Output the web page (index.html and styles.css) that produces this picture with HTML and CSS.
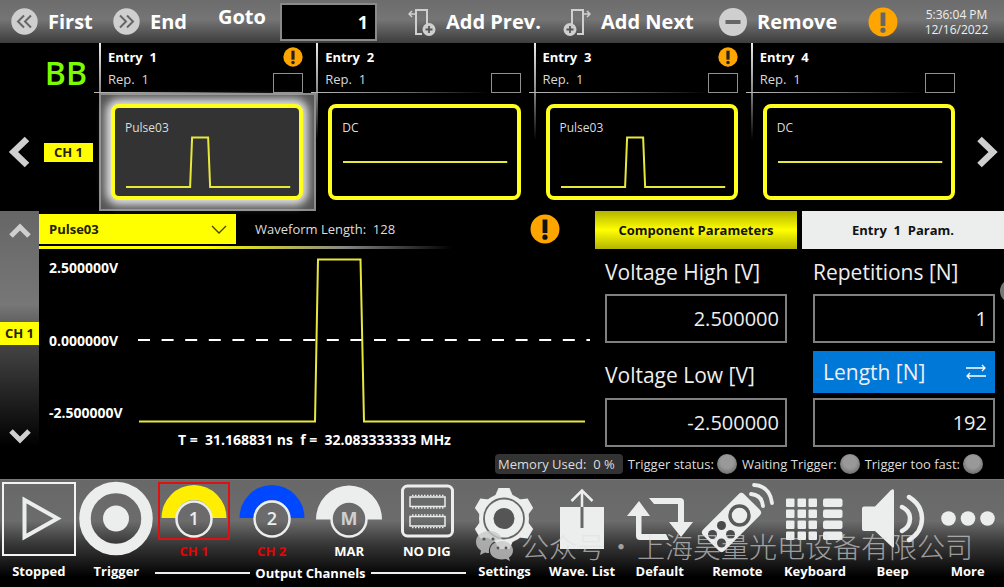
FILE: index.html
```html
<!DOCTYPE html>
<html lang="en">
  <head>
    <meta charset="UTF-8" />
    <meta name="viewport" content="width=device-width, initial-scale=1.0" />
    <title>Sequence Editor</title>
    <link rel="stylesheet" href="styles.css" />
  </head>
  <body>
    <!-- shared symbols -->
    <svg class="defs" width="0" height="0" aria-hidden="true">
      <symbol id="warn" viewBox="0 0 30 30">
        <circle cx="15" cy="15" r="14.5" fill="#ffa500" />
        <path d="M12.6 5.5h4.8v13.5h-4.8z" fill="currentColor" />
        <circle cx="15" cy="23.2" r="2.6" fill="currentColor" />
      </symbol>
      <symbol id="pulse" viewBox="0 0 184 88" preserveAspectRatio="none">
        <path d="M11 79H75L77 29.5H93L95 79H175" fill="none" stroke="#e8e83c" stroke-width="2" />
      </symbol>
      <symbol id="dc" viewBox="0 0 184 88" preserveAspectRatio="none">
        <path d="M11 54H175" fill="none" stroke="#e8e83c" stroke-width="2" />
      </symbol>
    </svg>

    <header class="topbar">
      <button class="tool">
        <svg width="27" height="27" viewBox="0 0 27 27">
          <circle cx="13.5" cy="13.5" r="13.2" fill="#cfcfcf" />
          <path d="M13 7.5L7 13.5L13 19.5M20 7.5L14 13.5L20 19.5" fill="none" stroke="#666" stroke-width="2" />
        </svg>
        First
      </button>
      <button class="tool">
        <svg width="27" height="27" viewBox="0 0 27 27">
          <circle cx="13.5" cy="13.5" r="13.2" fill="#cfcfcf" />
          <path d="M7 7.5L13 13.5L7 19.5M14 7.5L20 13.5L14 19.5" fill="none" stroke="#666" stroke-width="2" />
        </svg>
        End
      </button>
      <label class="goto-label" for="goto">Goto</label>
      <input class="goto-input" id="goto" type="text" value="1" />
      <button class="tool">
        <svg width="28" height="28" viewBox="0 0 28 28">
          <path d="M8 9V2H19V16M8 9V26H14" fill="none" stroke="#cfcfcf" stroke-width="2" />
          <path d="M7 6H1M4 3L1 6L4 9" fill="none" stroke="#cfcfcf" stroke-width="1.5" />
          <circle cx="21" cy="21.5" r="6.5" fill="#cfcfcf" />
          <path d="M21 18v7M17.5 21.5h7" stroke="#555" stroke-width="1.8" />
        </svg>
        Add Prev.
      </button>
      <button class="tool">
        <svg width="28" height="28" viewBox="0 0 28 28">
          <path d="M20 9V2H9V16M20 9V26H14" fill="none" stroke="#cfcfcf" stroke-width="2" />
          <path d="M21 6H27M24 3L27 6L24 9" fill="none" stroke="#cfcfcf" stroke-width="1.5" />
          <circle cx="7" cy="21.5" r="6.5" fill="#cfcfcf" />
          <path d="M7 18v7M3.5 21.5h7" stroke="#555" stroke-width="1.8" />
        </svg>
        Add Next
      </button>
      <button class="tool">
        <svg width="28" height="28" viewBox="0 0 28 28">
          <circle cx="14" cy="14" r="14" fill="#cfcfcf" />
          <path d="M6.5 14h15" stroke="#666" stroke-width="4" />
        </svg>
        Remove
      </button>
      <button class="tool warn-top" aria-label="Warnings">
        <svg width="30" height="30"><use href="#warn" /></svg>
      </button>
      <div class="clock">
        <div>5:36:04 PM</div>
        <div>12/16/2022</div>
      </div>
    </header>

    <section class="sequence">
      <div class="seq-left">
        <div class="board">BB</div>
        <div class="seq-channel">
          <button class="arrow" aria-label="Previous entries">
            <svg width="22" height="32" viewBox="0 0 22 32">
              <path d="M19 3L5.5 16L19 29" fill="none" stroke="#cfcfcf" stroke-width="6.5" />
            </svg>
          </button>
          <span class="ch-tag">CH 1</span>
        </div>
      </div>

      <article class="entry selected">
        <div class="entry-head">
          <div>
            <h3>Entry  1</h3>
            <p>Rep.  1</p>
          </div>
          <div class="entry-flags">
            <svg width="20" height="20"><use href="#warn" /></svg>
            <input type="checkbox" aria-label="Mark entry 1" />
          </div>
        </div>
        <div class="entry-body">
          <button class="wave">
            <span>Pulse03</span>
            <svg><use href="#pulse" /></svg>
          </button>
        </div>
      </article>
      <article class="entry">
        <div class="entry-head">
          <div>
            <h3>Entry  2</h3>
            <p>Rep.  1</p>
          </div>
          <div class="entry-flags">
            <input type="checkbox" aria-label="Mark entry 2" />
          </div>
        </div>
        <div class="entry-body">
          <button class="wave">
            <span>DC</span>
            <svg><use href="#dc" /></svg>
          </button>
        </div>
      </article>
      <article class="entry">
        <div class="entry-head">
          <div>
            <h3>Entry  3</h3>
            <p>Rep.  1</p>
          </div>
          <div class="entry-flags">
            <svg width="20" height="20"><use href="#warn" /></svg>
            <input type="checkbox" aria-label="Mark entry 3" />
          </div>
        </div>
        <div class="entry-body">
          <button class="wave">
            <span>Pulse03</span>
            <svg><use href="#pulse" /></svg>
          </button>
        </div>
      </article>
      <article class="entry">
        <div class="entry-head">
          <div>
            <h3>Entry  4</h3>
            <p>Rep.  1</p>
          </div>
          <div class="entry-flags">
            <input type="checkbox" aria-label="Mark entry 4" />
          </div>
        </div>
        <div class="entry-body">
          <button class="wave">
            <span>DC</span>
            <svg><use href="#dc" /></svg>
          </button>
        </div>
      </article>

      <div class="seq-right">
        <button class="arrow" aria-label="Next entries">
          <svg width="22" height="32" viewBox="0 0 22 32">
            <path d="M3.5 3L17 16L3.5 29" fill="none" stroke="#cfcfcf" stroke-width="6.5" />
          </svg>
        </button>
      </div>
    </section>

    <main class="editor">
      <div class="strip">
        <button class="arrow" aria-label="Previous channel">
          <svg width="22" height="16" viewBox="0 0 22 16">
            <path d="M2 13L11 4L20 13" fill="none" stroke="#cfcfcf" stroke-width="5" />
          </svg>
        </button>
        <span class="ch-tag">CH 1</span>
        <button class="arrow" aria-label="Next channel">
          <svg width="22" height="16" viewBox="0 0 22 16">
            <path d="M2 3L11 12L20 3" fill="none" stroke="#cfcfcf" stroke-width="5" />
          </svg>
        </button>
      </div>

      <section class="waveform">
        <div class="wave-head">
          <div class="picker">
            <select aria-label="Waveform">
              <option>Pulse03</option>
              <option>DC</option>
            </select>
            <svg width="16" height="9" viewBox="0 0 16 9">
              <path d="M1 1L8 8L15 1" fill="none" stroke="#444400" stroke-width="1.3" />
            </svg>
          </div>
          <span class="wave-length">Waveform Length:  128</span>
          <svg width="30" height="30"><use href="#warn" /></svg>
        </div>
        <div class="plot">
          <div class="axis">
            <span>2.500000V</span>
            <span>0.000000V</span>
            <span>-2.500000V</span>
          </div>
          <svg viewBox="0 0 452 180" preserveAspectRatio="none">
            <path d="M0 91H452" stroke="#fff" stroke-width="2" stroke-dasharray="12 11.6" />
            <path d="M1 172.5H177L180 10.5H222.5L226 172.5H447" fill="none" stroke="#e8e83c" stroke-width="2" />
          </svg>
        </div>
        <p class="timing">T =  31.168831 ns  f =  32.083333333 MHz</p>
      </section>

      <section class="params">
        <div class="tabs">
          <button class="tab active">Component Parameters</button>
          <button class="tab">Entry  1  Param.</button>
        </div>
        <div class="fields">
          <div class="field">
            <label for="vhigh">Voltage High [V]</label>
            <input id="vhigh" type="text" value="2.500000" />
          </div>
          <div class="field">
            <label for="reps">Repetitions [N]</label>
            <input id="reps" type="text" value="1" />
          </div>
          <div class="field">
            <label for="vlow">Voltage Low [V]</label>
            <input id="vlow" type="text" value="-2.500000" />
          </div>
          <div class="field">
            <button class="unit">
              Length [N]
              <svg width="22" height="16" viewBox="0 0 22 16">
                <path d="M1 4H20M17 1L20 4L17 7M21 12H2M5 9L2 12L5 15" fill="none" stroke="#fff" stroke-width="1.3" />
              </svg>
            </button>
            <input id="length" type="text" value="192" aria-label="Length [N]" />
          </div>
        </div>
        <span class="handle"></span>
      </section>

      <div class="status">
        <span class="memory">Memory Used:  0 %</span>
        <span class="led">Trigger status:</span>
        <span class="led">Waiting Trigger:</span>
        <span class="led">Trigger too fast:</span>
      </div>
    </main>

    <footer class="bottombar">
      <button class="action">
        <svg width="74" height="76" viewBox="0 0 74 76">
          <rect x="1" y="2" width="72" height="72" fill="none" stroke="#f2f4f4" stroke-width="2" />
          <path d="M22.5 19V56L55.5 37.5Z" fill="none" stroke="#eceeee" stroke-width="4" />
        </svg>
        Stopped
      </button>
      <button class="action">
        <svg width="74" height="76" viewBox="0 0 74 76">
          <circle cx="37" cy="37.5" r="31" fill="none" stroke="#eceeee" stroke-width="11.5" />
          <circle cx="37" cy="37.5" r="13" fill="#eceeee" />
        </svg>
        Trigger
      </button>

      <div class="channels">
        <button class="channel off">
          <svg width="74" height="60" viewBox="0 0 74 60">
            <rect x="2" y="2" width="70" height="56" fill="none" stroke="#dd1111" stroke-width="2" />
            <path d="M4.5 37A32.5 33 0 0 1 69.5 37H55A18 18 0 0 0 19 37Z" fill="#ffee00" />
            <circle cx="37" cy="38" r="17.5" fill="none" stroke="#eceeee" stroke-width="2.5" />
            <text x="37" y="44" text-anchor="middle">1</text>
          </svg>
          CH 1
        </button>
        <button class="channel off">
          <svg width="74" height="60" viewBox="0 0 74 60">
            <path d="M4.5 37A32.5 33 0 0 1 69.5 37H55A18 18 0 0 0 19 37Z" fill="#0048ff" />
            <circle cx="37" cy="38" r="17.5" fill="none" stroke="#eceeee" stroke-width="2.5" />
            <text x="37" y="44" text-anchor="middle">2</text>
          </svg>
          CH 2
        </button>
        <button class="channel">
          <svg width="74" height="60" viewBox="0 0 74 60">
            <path d="M4 38.5A33 34 0 0 1 70 38.5H55A18 18 0 0 0 19 38.5Z" fill="#eceeee" />
            <circle cx="37" cy="38" r="17.5" fill="none" stroke="#eceeee" stroke-width="2.5" />
            <text class="marker" x="37" y="44" text-anchor="middle">M</text>
          </svg>
          MAR
        </button>
        <button class="channel">
          <svg width="74" height="60" viewBox="0 0 74 60">
            <g fill="none" stroke="#eceeee">
              <rect x="12.5" y="5" width="50" height="50" rx="5" stroke-width="3" />
              <path d="M20 16H55V25.5H20ZM20 35.5H55V45H20Z" stroke-width="1.5" />
              <path d="M22 14.5H54M22 27H54M22 34H54M22 46.5H54" stroke-width="1.5" stroke-dasharray="1.5 1.5" />
            </g>
          </svg>
          NO DIG
        </button>
        <div class="group-title">Output Channels</div>
      </div>

      <button class="action">
        <svg width="74" height="76" viewBox="0 0 74 76">
          <g fill="#eceeee">
            <circle cx="37" cy="37.5" r="25" />
            <path id="tooth" d="M28 15L31.5 7H42.5L46 15V20H28Z" />
            <use href="#tooth" transform="rotate(60 37 37.5)" />
            <use href="#tooth" transform="rotate(120 37 37.5)" />
            <use href="#tooth" transform="rotate(180 37 37.5)" />
            <use href="#tooth" transform="rotate(240 37 37.5)" />
            <use href="#tooth" transform="rotate(300 37 37.5)" />
          </g>
          <circle cx="37" cy="37.5" r="20" fill="none" stroke="#666" stroke-width="1.8" />
          <circle cx="37" cy="37.5" r="10.5" fill="#555" />
        </svg>
        Settings
      </button>
      <button class="action">
        <svg width="74" height="76" viewBox="0 0 74 76">
          <path d="M15 26H59V68H15Z" fill="#eceeee" />
          <path d="M37 9V26M26.5 20L37 9.5L47.5 20" fill="none" stroke="#eceeee" stroke-width="2.5" />
          <path d="M37 26V47" stroke="#666" stroke-width="3" />
        </svg>
        Wave. List
      </button>
      <button class="action">
        <svg width="74" height="76" viewBox="0 0 74 76">
          <path d="M26 17H57Q61 17 61 21V41H70L58 56L46 41H55V23H31Z" fill="#eceeee" />
          <path d="M46 59H17Q13 59 13 55V35H4L16 20L27 35H18.5V53H43Z" fill="#eceeee" />
        </svg>
        Default
      </button>
      <button class="action">
        <svg width="74" height="76" viewBox="0 0 74 76">
          <rect x="16.5" y="12.5" width="30" height="58" rx="4" fill="#eceeee" transform="rotate(45 31.5 41.5)" />
          <circle cx="39.5" cy="34.5" r="9.5" fill="none" stroke="#5a5a5a" stroke-width="3.5" />
          <g fill="#4a4a4a">
            <circle cx="21.5" cy="44.5" r="4.5" />
            <circle cx="12.5" cy="53.5" r="4.5" />
            <circle cx="30.5" cy="53.5" r="4.5" />
            <circle cx="21.5" cy="62" r="4.5" />
          </g>
          <path d="M51 13Q62 14 63 25M54 4Q70 5 72 22" fill="none" stroke="#eceeee" stroke-width="3.8" stroke-linecap="round" />
        </svg>
        Remote
      </button>
      <button class="action">
        <svg width="74" height="76" viewBox="0 0 74 76">
          <g fill="#eceeee">
            <g id="keys">
              <rect x="8" y="17.5" width="8.5" height="8.5" rx="1" />
              <rect x="19.5" y="17.5" width="8.5" height="8.5" rx="1" />
              <rect x="30.5" y="17.5" width="8.5" height="8.5" rx="1" />
              <rect x="45" y="17.5" width="19.5" height="8.5" rx="2" />
            </g>
            <use href="#keys" y="11" />
            <use href="#keys" y="22" />
            <use href="#keys" y="33" />
          </g>
        </svg>
        Keyboard
      </button>
      <button class="action">
        <svg width="74" height="76" viewBox="0 0 74 76">
          <path d="M8 25.5H19L35 9Q38 7 38 10V65Q38 68 35 65L19 50H8Q6 50 6 48V27.5Q6 25.5 8 25.5Z" fill="#eceeee" />
          <path d="M46 26Q54 30 54 37.5Q54 46 46 50M53 16Q66 24 66 37.5Q66 51 53 59" fill="none" stroke="#eceeee" stroke-width="4.5" stroke-linecap="round" />
        </svg>
        Beep
      </button>
      <button class="action">
        <svg width="74" height="76" viewBox="0 0 74 76">
          <g fill="#eceeee">
            <circle cx="17.5" cy="37.5" r="7.3" />
            <circle cx="37" cy="37.5" r="7.3" />
            <circle cx="56.5" cy="37.5" r="7.3" />
          </g>
        </svg>
        More
      </button>

      <div class="watermark">
        <svg width="40" height="32" viewBox="0 0 40 32">
          <path d="M14 1C6 1 1 6 1 12C1 16 3 18.5 6 20.5L5 25L10 22.5Q12 23 14 23C13 15 19 9.5 27 9.5C26 4 20 1 14 1Z" />
          <path d="M27 11C20 11 15 15 15 20.5C15 26 20 29.5 27 29.5L31 29L35 31L34 27.5C37 25.5 38 23 38 20.5C38 15 33 11 27 11Z" />
          <g fill="#555">
            <circle cx="9" cy="9" r="1.6" />
            <circle cx="18" cy="9" r="1.6" />
            <circle cx="23" cy="18" r="1.4" />
            <circle cx="31" cy="18" r="1.4" />
          </g>
        </svg>
        <span lang="zh">公众号</span>
        <span>·</span>
        <span lang="zh">上海昊量光电设备有限公司</span>
      </div>
    </footer>
  </body>
</html>
```

FILE: styles.css
```css
* {
  box-sizing: border-box;
}
body {
  margin: 0;
  min-height: 100vh;
  display: flex;
  flex-direction: column;
  background: #000;
  color: #fff;
  font-family: "Open Sans", "Noto Sans", sans-serif;
  font-size: 13px;
  overflow-x: hidden;
}
h3,
p {
  margin: 0;
  white-space: pre;
}
button,
input,
select {
  font: inherit;
  color: inherit;
  margin: 0;
  padding: 0;
  border: none;
  border-radius: 0;
  background: none;
}
button {
  cursor: pointer;
}
svg {
  display: block;
  flex-shrink: 0;
}
.defs {
  position: absolute;
}

/* top bar */
.topbar {
  display: grid;
  grid-template-columns: 102fr 105fr 62fr 128fr 155fr 156fr 149fr 41fr 95fr;
  align-items: center;
  height: 43px;
  padding-left: 11px;
  background: linear-gradient(#6c6c6c, #757575 45%, #3c3c3c);
}
.tool {
  display: flex;
  align-items: center;
  gap: 10px;
  font-size: 20px;
  font-weight: bold;
  line-height: 40px;
  white-space: nowrap;
}
.warn-top {
  color: #666;
}
.goto-label {
  align-self: start;
  font-size: 20px;
  font-weight: bold;
  line-height: 34px;
}
.goto-input {
  width: 97px;
  height: 38px;
  padding-right: 7px;
  border: 2px solid #8a8a8a;
  background: #000;
  font-size: 18px;
  font-weight: bold;
  text-align: right;
}
.clock {
  color: #eee;
  font-size: 12px;
  line-height: 15px;
  text-align: center;
}

/* entries */
.sequence {
  display: grid;
  grid-template-columns: 99px repeat(4, 1fr) 36px;
  height: 168px;
}
.seq-left {
  display: flex;
  flex-direction: column;
}
.board {
  height: 60px;
  padding-right: 12px;
  color: #7cfc00;
  font-size: 32px;
  font-weight: 600;
  line-height: 60px;
  text-align: right;
}
.seq-channel {
  display: flex;
  align-items: center;
  gap: 14px;
  height: 98px;
  padding-left: 8px;
}
.ch-tag {
  background: #ffff00;
  color: #222200;
  font-weight: bold;
  text-align: center;
}
.seq-channel .ch-tag {
  width: 49px;
  line-height: 19px;
}
.seq-right {
  display: flex;
  align-items: center;
  height: 98px;
  margin-top: 60px;
  padding-left: 8px;
}
.entry {
  display: flex;
  flex-direction: column;
  background: linear-gradient(#eee, #888 50%, transparent) left top / 2px 97px no-repeat;
}
.entry-head {
  display: flex;
  justify-content: space-between;
  height: 50px;
  margin-left: -5px;
  padding-left: 14px;
  padding-right: 13px;
  background: linear-gradient(90deg, #bbb, #777 40%, transparent 80%) left bottom / 100% 1px no-repeat;
}
.entry h3 {
  padding-top: 4px;
  font-size: 13px;
  line-height: 20px;
}
.entry p {
  color: #d8d8d8;
  line-height: 24px;
}
.entry-flags {
  display: flex;
  flex-direction: column;
  justify-content: flex-end;
  align-items: flex-end;
  gap: 6px;
  color: #222;
}
.entry-flags input {
  appearance: none;
  width: 30px;
  height: 20px;
  border: 1px solid #909090;
}
.entry-body {
  flex: 1;
  padding: 11px 13px 11px 12px;
}
.selected .entry-body {
  border: 2px solid #8c8c8c;
  padding: 9px 11px 9px 10px;
  background: #555;
}
.wave {
  position: relative;
  display: block;
  width: 100%;
  height: 96px;
  border: 4px solid #ffff1e;
  border-radius: 8px;
  background: #000;
  color: #ddd;
  text-align: left;
}
.selected .wave {
  background: #333;
  box-shadow: 0 0 9px 5px #e4e4e4;
}
.wave span {
  display: block;
  height: 100%;
  padding: 10px;
  font-size: 12px;
  line-height: 20px;
}
.wave svg {
  position: absolute;
  inset: 0;
  width: 100%;
  height: 100%;
}

/* waveform editor */
.editor {
  flex: 1;
  display: grid;
  grid-template-columns: 39px 551fr 414fr;
  grid-template-rows: 1fr 28px;
}
.strip {
  grid-row: 1 / 3;
  display: flex;
  flex-direction: column;
  align-items: center;
  justify-content: space-between;
  padding: 12px 0 35px;
  background: linear-gradient(#666, #777 35%, #444 50%, #000 88%);
}
.strip .ch-tag {
  width: 100%;
  line-height: 23px;
}
.waveform {
  display: flex;
  flex-direction: column;
}
.wave-head {
  display: flex;
  align-items: center;
  height: 38px;
  padding-right: 30px;
  padding-bottom: 2px;
  color: #111;
  background: linear-gradient(90deg, #ffff00 30%, #888 55%, transparent 75%) left bottom / 100% 3px no-repeat;
}
.picker {
  position: relative;
  width: 197px;
  height: 31px;
  border-bottom: 1px solid #000;
}
.picker select {
  appearance: none;
  width: 100%;
  height: 100%;
  padding-left: 10px;
  background: #ffff00;
  color: #222200;
  font-weight: bold;
}
.picker svg {
  position: absolute;
  right: 9px;
  top: 11px;
  pointer-events: none;
}
.wave-length {
  flex: 1;
  padding-left: 19px;
  color: #ddd;
  white-space: pre;
}
.plot {
  flex: 1;
  display: flex;
}
.axis {
  display: flex;
  flex-direction: column;
  justify-content: space-between;
  width: 99px;
  padding: 9px 0 6px 10px;
  font-size: 14px;
  font-weight: bold;
  line-height: 20px;
}
.plot svg {
  flex: 1;
  width: 0;
  height: 180px;
}
.timing {
  font-size: 14px;
  font-weight: bold;
  line-height: 22px;
  text-align: center;
}
.params {
  position: relative;
  padding-left: 5px;
}
.tabs {
  display: grid;
  grid-template-columns: 1fr 1fr;
  gap: 5px;
}
.tab {
  height: 38px;
  background: #eceeee;
  color: #111;
  font-size: 13px;
  font-weight: bold;
  white-space: pre;
}
.tab.active {
  background: linear-gradient(#b4b400, #ffff00 50%, #b4b400);
}
.fields {
  display: grid;
  grid-template-columns: 1fr 1fr;
  column-gap: 26px;
  row-gap: 8px;
  padding: 0 9px 0 10px;
}
.field label,
.unit {
  display: flex;
  align-items: center;
  width: 100%;
  height: 42px;
  color: #eee;
  font-size: 21px;
}
.field label {
  height: 45px;
}
.field:nth-child(3) label {
  height: 47px;
}
.unit {
  justify-content: space-between;
  padding: 0 8px 0 10px;
  background: #0078d7;
}
.field input {
  width: 100%;
  height: 49px;
  padding-right: 6px;
  border: 2px solid #808080;
  color: #eee;
  font-size: 20px;
  text-align: right;
}
.unit + input {
  margin-top: 5px;
}
.handle {
  position: absolute;
  right: -20px;
  top: 68px;
  width: 24px;
  height: 24px;
  border-radius: 50%;
  background: #777;
}
.status {
  grid-column: 2 / 4;
  display: flex;
  align-items: center;
  justify-content: flex-end;
  gap: 5px;
  padding-right: 21px;
  padding-bottom: 2px;
  color: #ddd;
  white-space: pre;
}
.memory {
  padding: 0 8px 0 3px;
  border-radius: 4px;
  background: #333;
  line-height: 20px;
}
.led {
  display: flex;
  align-items: center;
  gap: 3px;
}
.led::after {
  content: "";
  width: 20px;
  height: 20px;
  border-radius: 50%;
  background: radial-gradient(circle at 50% 40%, #999 40%, #777 70%);
}

/* bottom bar */
.bottombar {
  position: relative;
  display: grid;
  grid-template-columns: repeat(12, 31fr) 29fr;
  height: 109px;
  padding-top: 1px;
  border-top: 1px solid #777;
  background: linear-gradient(#686868, #6c6c6c 38%, #3a3a3a 58%, #000 90%);
  overflow: hidden;
}
.action,
.channel {
  display: flex;
  flex-direction: column;
  align-items: center;
  min-width: 0;
  font-weight: bold;
  font-size: 13px;
  line-height: 28px;
  white-space: nowrap;
}
.channels {
  grid-column: span 4;
  display: grid;
  grid-template-columns: repeat(4, 1fr);
  align-content: start;
}
.channel {
  line-height: 20px;
}
.channel.off {
  color: #e00;
}
.channel text {
  fill: #eceeee;
  font-size: 18px;
  font-weight: 600;
}
.channel .marker {
  fill: #d0d0d0;
  font-weight: bold;
}
.group-title {
  grid-column: 1 / -1;
  display: flex;
  align-items: center;
  gap: 5px;
  font-weight: bold;
  line-height: 24px;
}
.group-title::before,
.group-title::after {
  content: "";
  flex: 1;
  height: 2px;
  background: #eee;
}
.watermark {
  position: absolute;
  right: 31px;
  bottom: 26px;
  display: flex;
  align-items: center;
  gap: 2px;
  color: rgba(225, 225, 225, 0.65);
  font-family: "Noto Sans CJK SC", sans-serif;
  font-size: 28px;
  font-weight: 300;
  line-height: 28px;
  white-space: nowrap;
  pointer-events: none;
}
.watermark svg {
  margin-right: 4px;
  fill: rgba(200, 200, 200, 0.8);
}
```
